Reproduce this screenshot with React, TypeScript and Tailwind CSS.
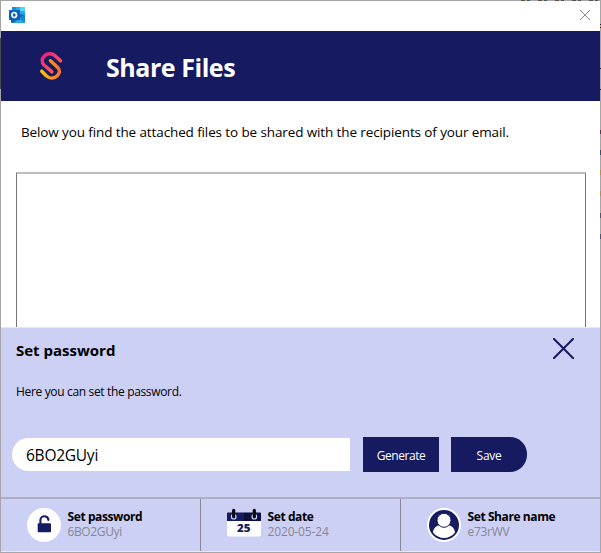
import type { ReactNode } from "react";

function OutlookIcon() {
  return (
    <svg width="16" height="16" viewBox="0 0 16 16">
      <rect x="3" y="0" width="13" height="9" fill="#1490df" />
      <rect x="7" y="0" width="4.5" height="4" fill="#28a8ea" />
      <rect x="11" y="0" width="5" height="7" fill="#50d9ff" />
      <path d="M11 4h5v4h-5z" fill="#28a8ea" />
      <path d="M2 7.5h14V16H3a1 1 0 0 1-1-1z" fill="#1066b5" />
      <path d="M16 7.5V16H4l7-5z" fill="#28a8ea" />
      <path d="M16 8v8l-5.500-5z" fill="#1784d0" />
      <rect x="0" y="3" width="11" height="10" rx="0.6" fill="#0a63bd" />
      <ellipse cx="5.200" cy="8" rx="2.300" ry="2.500" fill="none" stroke="#fff" strokeWidth="1.700" />
    </svg>
  );
}

function BrandMark() {
  return (
    <svg width="24" height="30" viewBox="0 0 24 30" fill="none" strokeLinecap="round" strokeLinejoin="round" strokeWidth="3.500">
      <defs>
        <linearGradient id="pinkOrange" x1="3" y1="3" x2="17" y2="20" gradientUnits="userSpaceOnUse">
          <stop stopColor="#ee1d87" />
          <stop offset="1" stopColor="#f8644b" />
        </linearGradient>
        <linearGradient id="yellowOrange" x1="3" y1="20" x2="20" y2="18" gradientUnits="userSpaceOnUse">
          <stop stopColor="#fdbd0c" />
          <stop offset="1" stopColor="#f47432" />
        </linearGradient>
      </defs>
      <path d="M21.500 9.800 16 4.700C12.500 1.700 8 2.200 5.300 5S2.500 11.500 5.300 14.300L12.800 20.800" stroke="url(#pinkOrange)" />
      <path d="M2.800 20.200 7.500 25C11 28 15.500 27.500 18.300 24.700S21.300 18.800 18.300 16L11.500 9.800" stroke="url(#yellowOrange)" />
    </svg>
  );
}

function LockIcon() {
  return (
    <svg width="34" height="34" viewBox="0 0 34 34">
      <circle cx="17" cy="17" r="17" fill="#fff" />
      <path d="M13.400 16v-3.500a4 4 0 0 1 8-.6" fill="none" stroke="#151a61" strokeWidth="2.100" strokeLinecap="round" />
      <rect x="10.700" y="15.300" width="13.300" height="8.900" rx="1" fill="#151a61" />
    </svg>
  );
}

function CalendarIcon() {
  return (
    <svg width="34" height="29" viewBox="0 0 34 29">
      <path d="M0 12h34v14.500a2 2 0 0 1-2 2H2a2 2 0 0 1-2-2z" fill="#fff" />
      <path d="M1 4.500h16V13H0V5.500a1 1 0 0 1 1-1z" fill="#151a61" />
      <path d="M17 4.500h16a1 1 0 0 1 1 1V13H17z" fill="#0c0f3b" />
      <circle cx="6.700" cy="8.700" r="2.300" fill="#151a61" stroke="#ccd0f4" strokeWidth="1.200" />
      <circle cx="27.300" cy="8.700" r="2.300" fill="#0c0f3b" stroke="#ccd0f4" strokeWidth="1.200" />
      <path d="M6.700 2.300v5.200M27.300 2.300v5.200" stroke="#05050b" strokeWidth="3.200" strokeLinecap="round" />
      <text x="10" y="24.300" fill="#151a61" fontFamily="Open Sans, sans-serif" fontSize="10.500" fontWeight="800" textLength="13.500" lengthAdjust="spacingAndGlyphs">25</text>
    </svg>
  );
}

function PersonIcon() {
  return (
    <svg width="34" height="34" viewBox="0 0 34 34">
      <circle cx="17" cy="17" r="17" fill="#fff" />
      <circle cx="17" cy="17" r="15" fill="#151a61" />
      <path d="M6 24.500c.4-4.500 3.500-7 7-7.200 2.500 1.500 5.500 1.500 8 0 3.500.2 6.600 2.700 7 7.200-5.500 7.300-16.500 7.300-22 0z" fill="#fff" />
      <circle cx="17" cy="12.300" r="7" fill="#fff" stroke="#151a61" strokeWidth="1" />
    </svg>
  );
}

function Option({ icon, title, value, spacing }: { icon: ReactNode; title: string; value: string; spacing: string }) {
  return (
    <button className="flex items-start gap-[6.500px] border-l border-[#888894] pl-[26px] pt-[8px] text-left first:border-l-0">
      <span className="h-[34px] w-[34px] pt-px">{icon}</span>
      <span className="whitespace-nowrap pt-[2px] text-[12px] leading-[15px]">
        <span className="block font-bold tracking-[-0.410px] text-black">{title}</span>
        <span className={`block text-[#858591] ${spacing}`}>{value}</span>
      </span>
    </button>
  );
}

// Slivers of the desktop showing at the window's edge.
function EdgeMarks() {
  return (
    <div className="pointer-events-none absolute inset-0">
      <div className="absolute left-[521px] top-0 h-px w-[79px] bg-[repeating-linear-gradient(90deg,#54504e_0_4px,#b9a48a_4px_6px,#435466_6px_9px,#a5a5a5_9px_17px)]" />
      <div className="absolute left-0 top-[38px] h-[51px] w-px bg-[#47474d]" />
      <div className="absolute left-[600px] top-[24px] h-[6px] w-px bg-[repeating-linear-gradient(#222_0_1px,#b9a48a_1px_3px)]" />
      <div className="absolute left-[600px] top-[68px] h-px w-px bg-[#222]" />
      <div className="absolute left-[600px] top-[89px] h-px w-px bg-[#222]" />
      <div className="absolute left-[600px] top-[130px] h-[4px] w-px bg-[#593653]" />
      <div className="absolute left-[600px] top-[150px] h-[5px] w-px bg-[#304f72]" />
      <div className="absolute left-[600px] top-[170px] h-[5px] w-px bg-[#b98a4a]" />
      <div className="absolute left-[600px] top-[191px] h-[5px] w-px bg-[#b98a4a]" />
      <div className="absolute left-[600px] top-[213px] h-[5px] w-px bg-[#4a5277]" />
      <div className="absolute left-[600px] top-[234px] h-[5px] w-px bg-[#4a5277]" />
    </div>
  );
}

export default function App() {
  return (
    <div className="relative h-[553px] w-[601px]">
      <main className="flex h-[553px] w-[601px] flex-col overflow-hidden border border-[#a5a5a5] bg-white font-['Open_Sans','Noto_Sans',sans-serif] text-black">
        <div className="flex h-[30px] shrink-0 items-start justify-between pl-2 pr-[10px]">
          <span className="pt-[6px]"><OutlookIcon /></span>
          <button aria-label="Close window" className="pt-[9px]">
            <svg width="10" height="10" viewBox="0 0 10 10" stroke="#8b8b8b"><path d="m0 0 10 10M10 0 0 10" /></svg>
          </button>
        </div>
        <header className="flex h-[70px] shrink-0 items-center bg-[#151a61] pl-[38px]">
          <BrandMark />
          <h1 className="ml-[43px] whitespace-nowrap pt-px text-[25px] font-bold leading-[32px] tracking-[-0.450px] text-white">Share Files</h1>
        </header>
        <p className="h-[71px] shrink-0 whitespace-nowrap pl-5 pt-[21px] text-[13.500px] leading-[20px] tracking-[-0.115px]">Below you find the attached files to be shared with the recipients of your email.</p>
        <div className="ml-[15px] mr-[14px] h-[155px] shrink-0 border-x border-t-2 border-x-[#777] border-t-[#bebebe]" />
        <section className="flex h-[170px] shrink-0 flex-col border-t border-[#e5e7fa] bg-[#cdd0f5]">
          <div className="flex h-[32px] items-start justify-between pl-[15px] pr-[26px]">
            <h2 className="pt-[12px] text-[15px] font-bold leading-[20px]">Set password</h2>
            <button aria-label="Close panel" className="pt-[10px]">
              <svg width="21" height="21" viewBox="0 0 21 21" stroke="#151a61" strokeWidth="2" strokeLinecap="round"><path d="m.8.8 19.400 19.400M20.200.8.8 20.200" /></svg>
            </button>
          </div>
          <p className="pl-[15px] pt-[24px] text-[12px] leading-[16px] tracking-[-0.340px]">Here you can set the password.</p>
          <div className="mt-[37px] flex h-[35px] items-center pl-[11px]">
            <input aria-label="Password" defaultValue="6BO2GUyi" className="h-[33px] w-[338px] rounded-l-[17px] bg-white pl-[14px] text-[15.500px] tracking-[-0.250px] outline-none" />
            <button className="ml-[13px] h-[35px] w-[76px] bg-[#151a61] pt-[2px] text-[12px] tracking-[-0.450px] text-white">Generate</button>
            <button className="ml-[12px] h-[35px] w-[76px] rounded-r-[17px] bg-[#151a61] pt-[2px] text-[12px] tracking-[-0.300px] text-white">Save</button>
          </div>
        </section>
        <nav className="grid h-[55px] shrink-0 grid-cols-[199px_200px_200px] border-b border-t-2 border-b-[#e5e7fa] border-t-[#adafc0] bg-[#cdd0f5]">
          <Option icon={<LockIcon />} title="Set password" value="6BO2GUyi" spacing="tracking-[-0.380px]" />
          <Option icon={<CalendarIcon />} title="Set date" value="2020-05-24" spacing="tracking-[-0.150px]" />
          <Option icon={<PersonIcon />} title="Set Share name" value="e73rWV" spacing="tracking-[-0.300px]" />
        </nav>
      </main>
      <EdgeMarks />
    </div>
  );
}
